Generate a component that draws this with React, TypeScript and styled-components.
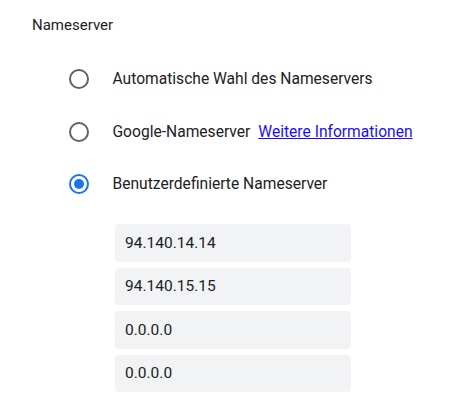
import React from "react";
import styled, { createGlobalStyle } from "styled-components";

const Global = createGlobalStyle`
  html, body { margin: 0; padding: 0; background: #fff; }
  body { font-family: Roboto, "Noto Sans", Arial, sans-serif; color: #202124; }
`;

const Page = styled.div`
  padding: 15px 0 0 32px;
`;

const Title = styled.div`
  font-size: 15px;
  line-height: 20px;
  color: #202124;
  margin-bottom: 24px;
`;

const Options = styled.div`
  display: flex;
  flex-direction: column;
  padding-left: 37px;
  gap: 12.5px;
`;

const Row = styled.label`
  display: flex;
  align-items: center;
  gap: 23.5px;
  height: 40px;
  font-size: 15.6px;
  color: #202124;
`;

const Radio = styled.span<{ $checked?: boolean }>`
  box-sizing: border-box;
  width: 20px;
  height: 20px;
  border-radius: 50%;
  border: 2px solid ${(p) => (p.$checked ? "#1a73e8" : "#5f6368")};
  display: flex;
  align-items: center;
  justify-content: center;
  flex-shrink: 0;
  &::after {
    content: "";
    width: 10px;
    height: 10px;
    border-radius: 50%;
    background: #1a73e8;
    display: ${(p) => (p.$checked ? "block" : "none")};
  }
`;

const Link = styled.a`
  color: #1a0dff;
  text-decoration: underline;
  margin-left: 8px;
  cursor: pointer;
`;

const Inputs = styled.div`
  display: flex;
  flex-direction: column;
  gap: 6px;
  margin: 20px 0 0 83px;
  width: 236px;
`;

const Field = styled.input`
  box-sizing: border-box;
  height: 37.5px;
  width: 100%;
  border: none;
  border-radius: 4px;
  background: #f1f3f4;
  padding: 0 10px;
  font-family: Roboto, "Noto Sans", Arial, sans-serif;
  font-size: 15.5px;
  color: #202124;
  outline: none;
`;

export default function App() {
  const values = ["94.140.14.14", "94.140.15.15", "0.0.0.0", "0.0.0.0"];
  return (
    <>
      <Global />
      <Page>
        <Title>Nameserver</Title>
        <Options>
          <Row>
            <Radio />
            <span>Automatische Wahl des Nameservers</span>
          </Row>
          <Row>
            <Radio />
            <span>
              Google-Nameserver<Link>Weitere Informationen</Link>
            </span>
          </Row>
          <Row>
            <Radio $checked />
            <span>Benutzerdefinierte Nameserver</span>
          </Row>
        </Options>
        <Inputs>
          {values.map((v, i) => (
            <Field key={i} defaultValue={v} />
          ))}
        </Inputs>
      </Page>
    </>
  );
}
